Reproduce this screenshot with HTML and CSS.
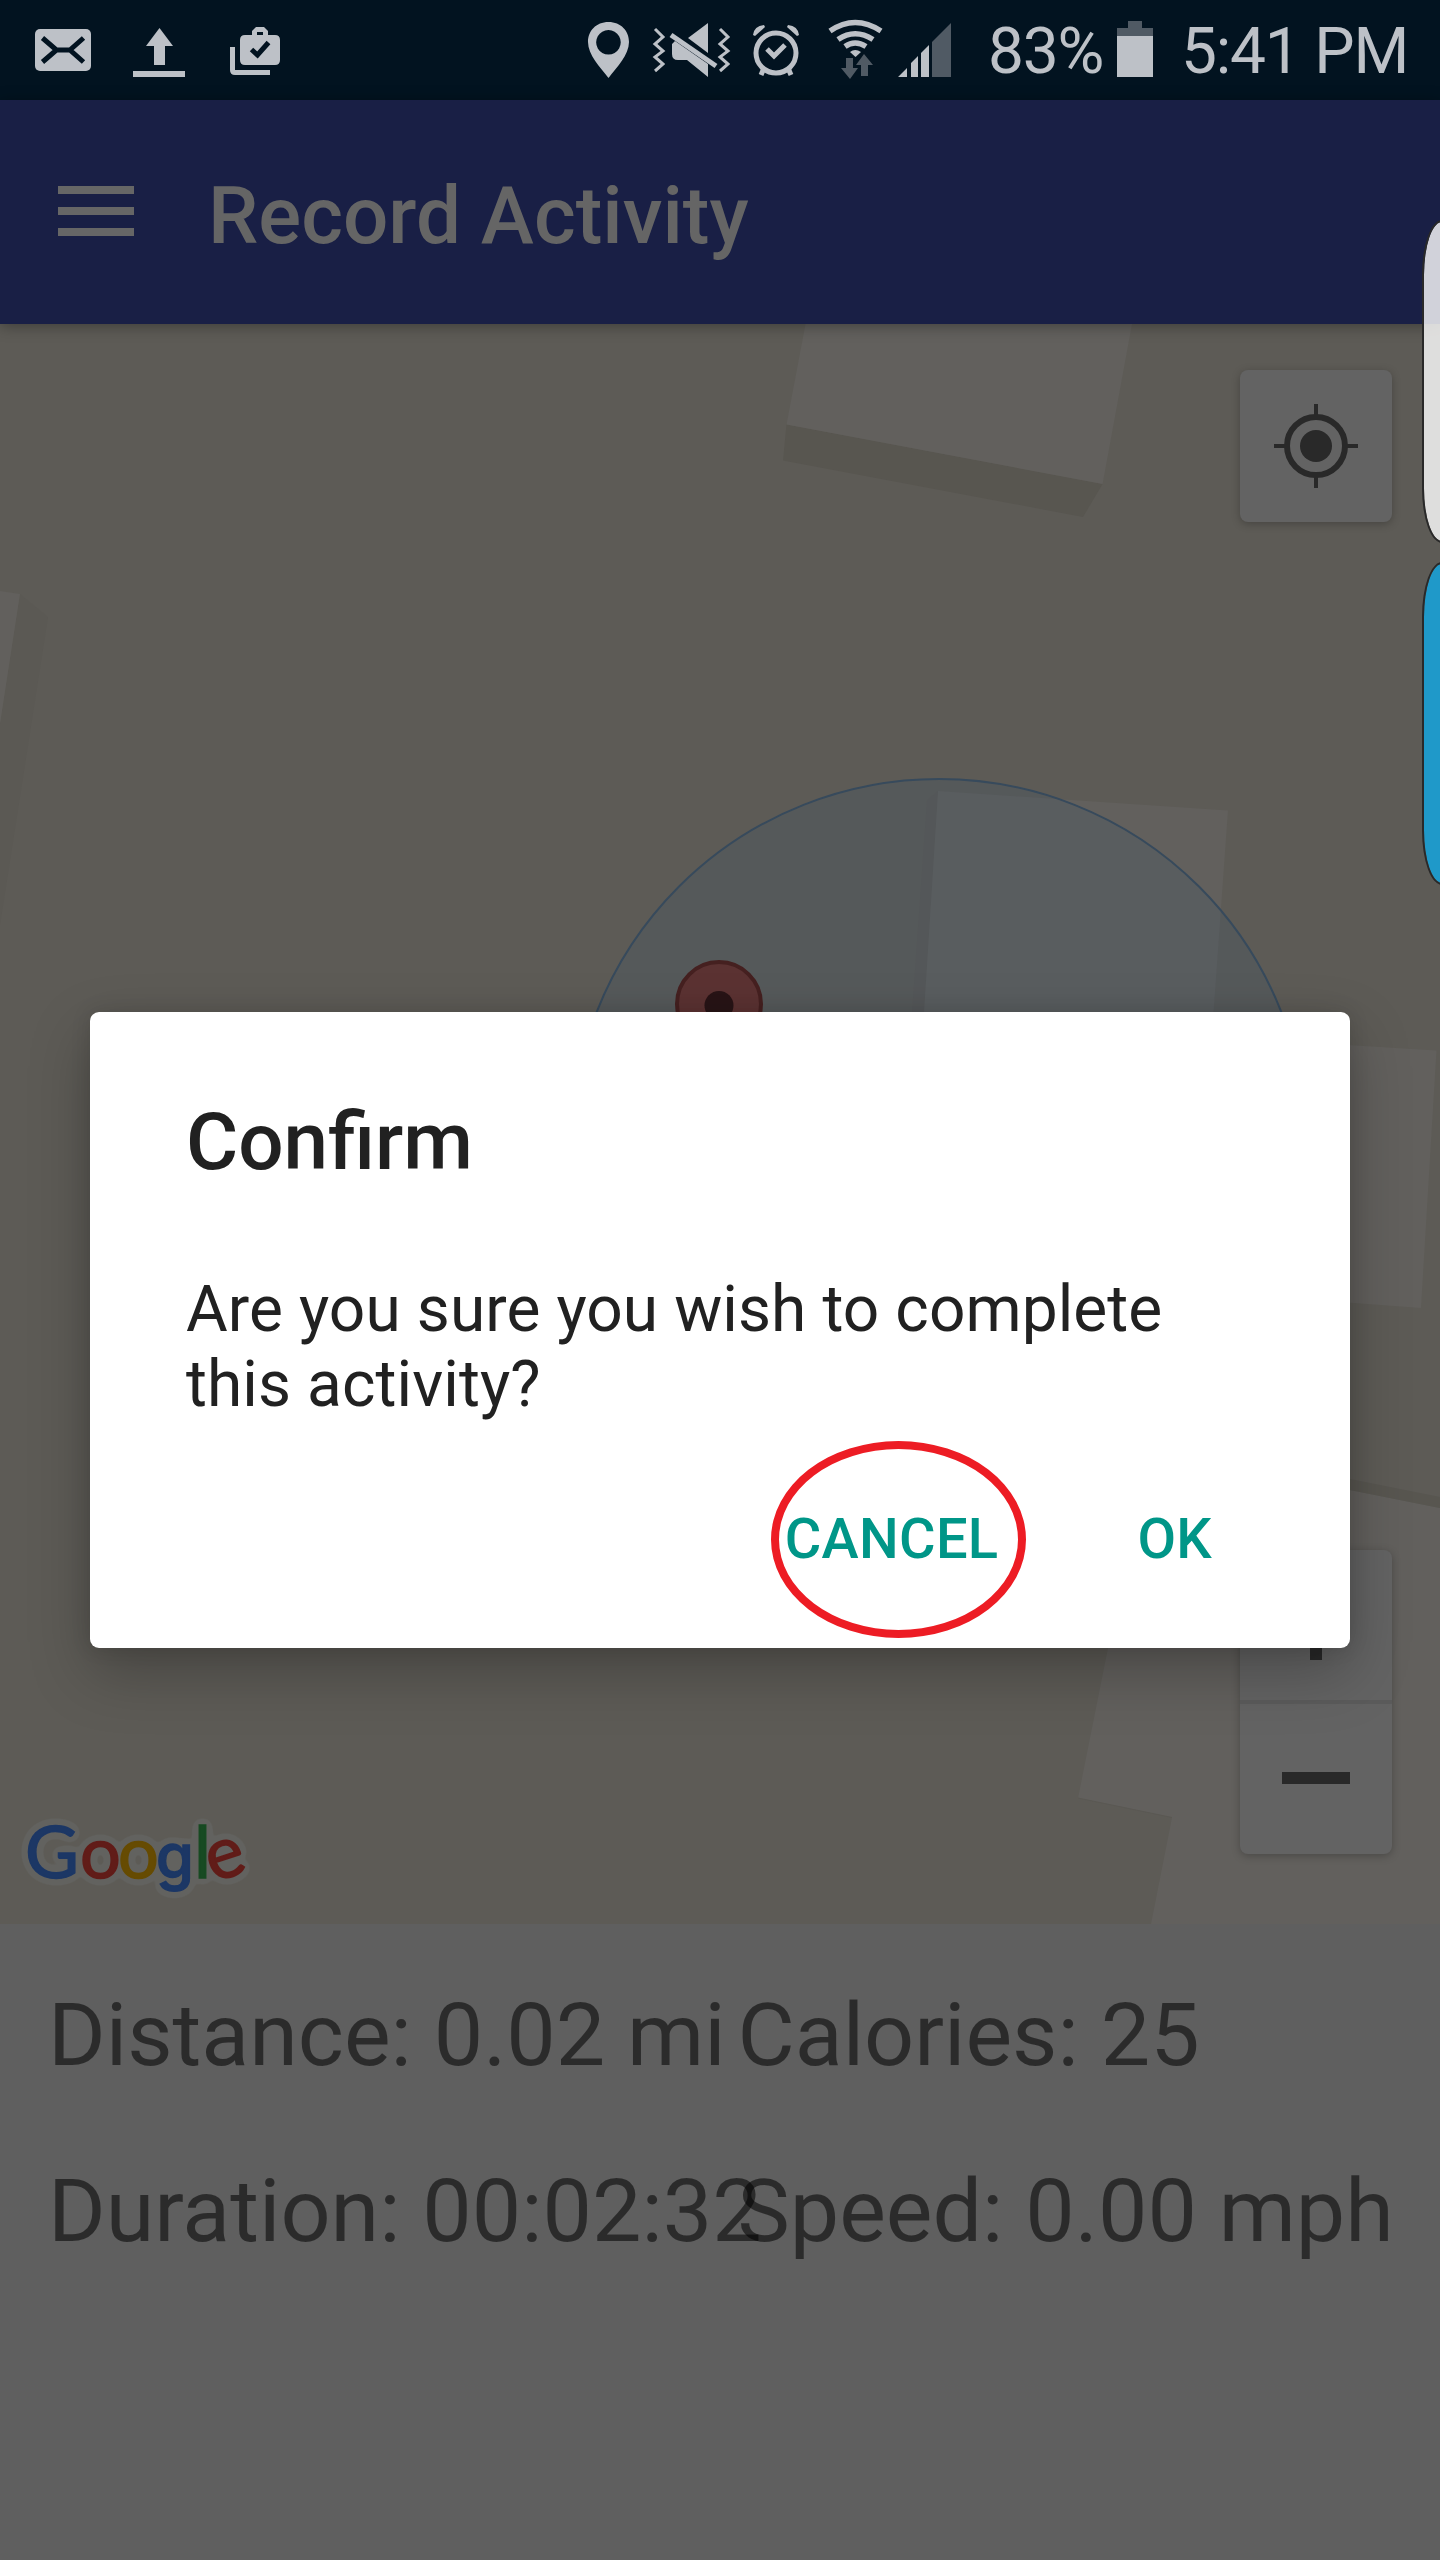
FILE: index.html
```html
<!DOCTYPE html>
<html lang="en">
<head>
<meta charset="utf-8">
<title>Record Activity</title>
<link rel="stylesheet" href="styles.css">
</head>
<body>
<div class="screen">
  <header class="status-bar">
    <svg class="status-icons" width="320" height="100" viewBox="0 0 320 100">
      <rect x="35" y="29" width="56" height="42" rx="5"/>
      <path class="cut" d="M42.500 38 56.500 50 42.500 62M83.500 38 70 50 83.500 62M56.500 50H70"/>
      <path d="M159.500 28 173 46H165V65H154V46H146ZM133 71H185V77H133Z"/>
      <path fill-rule="evenodd" d="M240 40Q240 35 245 35H252V31L256 27H264L268 31V35H275Q280 35 280 40V60Q280 65 275 65H245Q240 65 240 60ZM257 35H263V32H257ZM230 47H235V70H270V75H235Q230 75 230 70Z"/>
      <path class="cut check" d="M251.500 49.500 257.500 55 268.500 42.500"/>
    </svg>
    <div class="status-right">
      <svg class="status-icons" width="400" height="100" viewBox="560 0 400 100">
        <path fill-rule="evenodd" d="M608.500 22C596 22 588 31 588 42C588 55 600 67 608.500 78C617 67 629 55 629 42C629 31 621 22 608.500 22ZM608.500 30A12.300 12.300 0 1 1 608.400 30Z"/>
        <path class="line thin" d="M655 29 663 37 655 44 663 51 655 57 663 64 655 71M720 29 728 37 720 44 728 51 720 57 728 64 720 71"/>
        <path d="M708 23V53L688 38ZM672 44 675 41 708 64V77L687 60H678Q672 60 672 54Z"/>
        <path class="line" d="M671 35 716 66"/>
        <circle class="line alarm" cx="776" cy="53" r="20"/>
        <path class="line alarm" d="M767 49 774 56 785 45M764 68 761 75M788 68 791 75"/>
        <path d="M753 35Q754 26 764 25L765 27 755 36ZM799 35Q798 26 788 25L787 27 797 36Z"/>
        <path class="line wifi" d="M830 31Q855 14 881 31M838 39.500Q855 28 873 39.500M845 46.500Q855 39.500 866 46.500"/>
        <path d="M850 52Q855 48 861 52L855.500 57Z"/>
        <g class="dim"><path d="M846 58H853V68H858L850 79 841 68H846ZM861 76V65H856L864 54 873 65H868V76ZM932 77V42L951 23V77Z"/></g>
        <path d="M898 77 907 68V77ZM911 77V63L918 56V77ZM921 77V53L929 45V77Z"/>
      </svg>
      <span class="battery-text">83%</span>
      <svg class="status-icons battery" width="36" height="100" viewBox="0 0 36 100">
        <path class="dim" d="M0 28H11V21H25V28H36V36H0Z"/><path d="M0 36H36V77H0Z"/>
      </svg>
      <span class="clock">5:41 PM</span>
    </div>
  </header>

  <div class="app-bar">
    <div class="menu"><i></i><i></i><i></i></div>
    <h1 class="app-title">Record Activity</h1>
  </div>

  <main class="map">
    <svg class="map-canvas" width="1440" height="1600" viewBox="0 324 1440 1600">
      <path class="side" d="M786.500 424.400 783 460.400 1083 517 1102.600 484Z"/>
      <path class="roof" d="M805.500 324H1132L1102.600 484 786.500 424.400Z"/>
      <path class="side faint" d="M20 594 48 617 0 925V724Z"/>
      <path class="roof" d="M0 591 20 594 0 724Z"/>
      <path class="side faint" d="M938 791 927 800 912 1012H924Z"/>
      <path class="roof" d="M938 791 1228 810.500 1213 1020H923.500Z"/>
      <path class="roof" d="M1340 1044.500 1436.500 1050.500 1421 1308 1340 1302Z"/>
      <path class="roof" d="M1340 1488 1440 1508V1924H1151L1172 1817.500 1078 1798 1112 1628Z"/>
      <path class="side" d="M1340 1477 1440 1497V1508L1340 1488Z"/>
      <path class="edge" d="M1078 1798 1172 1817.500"/>
      <circle class="accuracy" cx="939" cy="1147" r="368"/>
      <circle class="pin" cx="719" cy="1004" r="42"/>
      <circle class="pin-dot" cx="719" cy="1005.500" r="14.500"/>
    </svg>
    <div class="locate">
      <svg width="152" height="152" viewBox="-76 -76 152 152">
        <circle r="29" class="ring"/><circle r="16"/>
        <path class="tick" d="M0-42V-31M0 42V31M-42 0H-31M42 0H31"/>
      </svg>
    </div>
    <div class="zoom">
      <div class="zoom-btn"><i class="bar"></i><i class="bar upright"></i></div>
      <div class="zoom-btn"><i class="bar"></i></div>
    </div>
    <svg class="logo" width="280" height="144" viewBox="0 1780 280 144">
      <filter id="halo" x="-15%" y="-30%" width="130%" height="160%" color-interpolation-filters="sRGB">
        <feGaussianBlur in="SourceAlpha" stdDeviation="4.500"/>
        <feComponentTransfer result="spread"><feFuncA type="linear" slope="25" intercept="-1"/></feComponentTransfer>
        <feFlood flood-color="#62625f"/>
        <feComposite in2="spread" operator="in"/>
        <feMerge><feMergeNode/><feMergeNode in="SourceGraphic"/></feMerge>
      </filter>
      <g filter="url(#halo)">
        <text class="lato blue" x="25" y="1877.500" textLength="54" lengthAdjust="spacingAndGlyphs">G</text><text class="lato red" x="80" y="1877.500">o</text><text class="lato yellow" x="118" y="1877.500">o</text><text class="inter blue" x="156" y="1877.500">g</text><text class="lato green" x="194" y="1877.500">l</text><text class="lato red" x="207" y="1877.500" transform="rotate(-18 226 1861)">e</text>
      </g>
    </svg>
  </main>

  <section class="stats">
    <span>Distance: 0.02 mi</span><span>Calories: 25</span>
    <span>Duration: 00:02:32</span><span>Speed: 0.00 mph</span>
  </section>

  <div class="edge-tab light"></div>
  <div class="edge-tab blue-tab"></div>

  <div class="dialog">
    <h2 class="dialog-title">Confirm</h2>
    <p class="dialog-text">Are you sure you wish to complete this activity?</p>
    <div class="actions">
      <span class="action">CANCEL<i class="marker"></i></span>
      <span class="action">OK</span>
    </div>
  </div>
</div>
</body>
</html>
```
FILE: styles.css
```css
* { box-sizing: border-box; }
body { margin: 0; font-family: Roboto, "Liberation Sans", sans-serif; }
h1, h2, p { margin: 0; }
svg { display: block; }

.screen {
  position: relative;
  display: flex;
  flex-direction: column;
  width: 1440px;
  height: 2560px;
  overflow: hidden;
  background: #5f5f5f;
}

.status-bar {
  display: flex;
  justify-content: space-between;
  height: 100px;
  background: #021320;
  color: #bdc1c7;
  font-size: 64px;
  letter-spacing: -1.2px;
  line-height: 104px;
}
.status-right { display: flex; width: 880px; white-space: nowrap; }
.status-icons { flex: none; fill: #bdc1c7; }
.status-icons .cut { fill: none; stroke: #021320; stroke-width: 5; }
.status-icons .line { fill: none; stroke: #bdc1c7; stroke-width: 5; }
.status-icons .thin { stroke-width: 3; }
.status-icons .wifi { stroke-width: 5.5; }
.status-icons .dim { fill: #505a64; }
.battery-text { width: 157px; padding-left: 28px; }
.clock { padding-left: 28px; }

.app-bar {
  position: relative;
  z-index: 1;
  display: flex;
  align-items: center;
  height: 224px;
  padding-left: 58px;
  background: #191f45;
  box-shadow: 0 2px 14px rgba(0, 0, 0, .35);
  color: #656565;
}
.menu { display: flex; flex-direction: column; gap: 13px; width: 76px; margin: 0 74px 2px 0; }
.menu i { height: 8px; background: #666; }
.app-title { font-size: 80px; font-weight: 500; line-height: 94px; padding-top: 7px; }

.map { position: relative; height: 1600px; background: #5d5b56; }
.roof { fill: #62605d; }
.side { fill: #585650; }
.faint { fill: #5b5954; }
.edge { fill: none; stroke: #5a5853; stroke-width: 1; }
.accuracy { fill: rgba(62, 84, 104, .25); stroke: #374a5c; stroke-width: 2; }
.pin { fill: #5b3232; stroke: #452020; stroke-width: 4; }
.pin-dot { fill: #281416; }

.locate, .zoom {
  position: absolute;
  right: 48px;
  width: 152px;
  border-radius: 8px;
  background: #636363;
  box-shadow: 0 2px 8px rgba(0, 0, 0, .25);
}
.locate { top: 46px; height: 152px; fill: #292929; }
.ring { fill: none; stroke: #292929; stroke-width: 6; }
.tick { stroke: #292929; stroke-width: 4; }
.zoom { top: 1226px; height: 304px; }
.zoom-btn { display: grid; place-items: center; height: 152px; }
.zoom-btn + .zoom-btn { box-shadow: 0 -2px #5b5b5b, inset 0 2px #5b5b5b; }
.zoom-btn .bar { grid-area: 1 / 1; width: 68px; height: 12px; background: #292929; }
.zoom-btn .upright { transform: rotate(90deg); }

.logo { position: absolute; left: 0; top: 1456px; }
.logo text { stroke-width: 1.5; }
.lato { font: 400 72px Lato, sans-serif; }
.inter { font: 500 61px Inter, sans-serif; }
.blue { fill: #1c3765; stroke: #1c3765; }
.red { fill: #611c18; stroke: #611c18; }
.yellow { fill: #664b02; stroke: #664b02; }
.green { fill: #174a22; stroke: #174a22; }

.stats {
  display: grid;
  grid-template-columns: 689.5px 1fr;
  grid-auto-rows: 176px;
  padding: 23px 0 0 48px;
  color: rgba(0, 0, 0, .54);
  font-size: 88px;
  line-height: 176px;
  white-space: nowrap;
}

.edge-tab {
  position: absolute;
  z-index: 2;
  left: 1422px;
  width: 40px;
  height: 323px;
  border: 2px solid #292929;
  border-radius: 22px / 60px;
  background-clip: padding-box;
}
.light { top: 220px; background-color: rgba(255, 255, 255, .8); }
.blue-tab { top: 562px; background-color: #1f99c9; }

.dialog {
  position: absolute;
  z-index: 3;
  left: 90px;
  top: 1012px;
  width: 1260px;
  height: 636px;
  padding: 83px 96px 0;
  border-radius: 9px;
  background: #fff;
  box-shadow: 0 24px 60px rgba(0, 0, 0, .25), 0 0 20px rgba(0, 0, 0, .12);
  color: #212121;
}
.dialog-title { font-size: 80px; font-weight: 500; line-height: 94px; letter-spacing: 0; }
.dialog-text { margin-top: 83px; font-size: 64px; line-height: 75px; letter-spacing: .08px; }
.actions {
  display: flex;
  justify-content: flex-end;
  gap: 139px;
  margin: 84px 42px 0 0;
  color: #009688;
  font-size: 56px;
  font-weight: 500;
  letter-spacing: .3px;
  line-height: 66px;
}
.action { position: relative; }
.marker {
  position: absolute;
  left: -14px;
  top: -65px;
  width: 255px;
  height: 197px;
  border: 8px solid #ed1c24;
  border-radius: 50%;
}
```
